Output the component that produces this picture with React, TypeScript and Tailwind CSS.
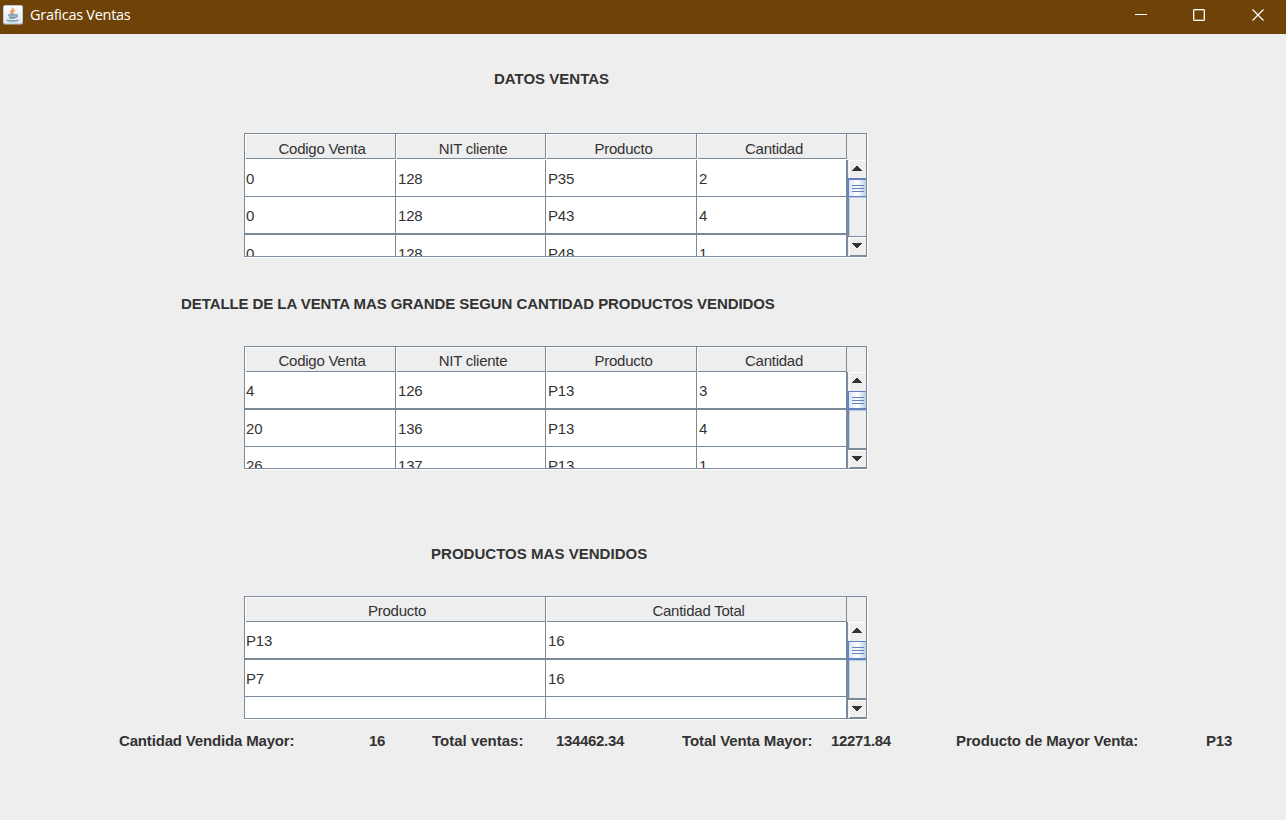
type TableProps = {
  headers: string[];
  rows: string[][];
  columns: string;
  first?: boolean;
};

function JavaIcon() {
  return (
    <svg width="20" height="20" viewBox="0 0 20 20" className="shrink-0">
      <defs>
        <linearGradient id="tile" x1="0" y1="0" x2="0" y2="1">
          <stop offset="0" stopColor="#ffffff" />
          <stop offset="1" stopColor="#dde3ea" />
        </linearGradient>
      </defs>
      <rect x="0.5" y="0.5" width="19" height="18.5" rx="1.5" fill="url(#tile)" stroke="#b9cbdc" />
      <g fill="none" strokeLinecap="round">
        <path d="M9.800 3.200c.9 1.900-2.600 2.600-2 4.200.2.600.8.900 1 1.400M11.400 5.400c-1.900.8-2.200 1.900-1.300 3" stroke="#e8893c" strokeWidth="1.300" />
        <path d="M5.600 10h7.200M6.400 11.800c1.500.5 4 .5 5.600 0M7 13.200h4.200M12.800 9.800c2.400-.5 2 2.300-.6 2.600" stroke="#6f95b0" strokeWidth="1.300" />
        <path d="M4.300 15.300c2 .9 8.300.9 10.400 0" stroke="#6f95b0" strokeWidth="1.400" />
      </g>
    </svg>
  );
}

function TitleBar() {
  return (
    <header className="flex h-[34px] items-center bg-[#6f4307] pl-[3px]">
      <div className="-mt-[5px]"><JavaIcon /></div>
      <h1 className="-mt-[4px] ml-[7px] flex-1 font-['Open_Sans',sans-serif] text-[14.5px] leading-5 tracking-[-0.27px] text-white">Graficas Ventas</h1>
      <svg width="176" height="34" fill="none" stroke="white" strokeWidth="1">
        <path d="M25 14.500h12" />
        <rect x="83.500" y="9.500" width="11" height="11" rx="0.500" />
        <rect x="84.500" y="10.500" width="9" height="9" strokeOpacity="0.35" />
        <path d="M142.500 9.500l11 11M153.500 9.500l-11 11" strokeWidth="1.200" />
      </svg>
    </header>
  );
}

function Arrow({ down = false }: { down?: boolean }) {
  return (
    <svg width="10" height="5" viewBox="0 0 10 5" fill="#333333" shapeRendering="crispEdges">
      {down ? <path d="M0 0h10v1h-1v1h-1v1h-1v1h-1v1h-2v-1h-1v-1h-1v-1h-1v-1h-1z" /> : <path d="M4 0h2v1h1v1h1v1h1v1h1v1h-10v-1h1v-1h1v-1h1v-1h1z" />}
    </svg>
  );
}

function ScrollBar({ first }: { first?: boolean }) {
  return (
    <div className="flex min-h-0 flex-1 flex-col border-l border-[#7a8a99]">
      <div className={`ml-px shrink-0 border-l border-t border-white bg-[#eeeeee] pl-[2px] pt-[5px] ${first ? "h-[18px]" : "h-[19px]"}`}>
        <Arrow />
      </div>
      <div className={`-ml-px flex h-[19px] shrink-0 flex-col gap-[2px] border-l-2 border-[#6382bf] bg-linear-to-r from-[#d8e6f5] via-white to-[#b8cfe5] pl-[3px] ${first ? "border-t-2 border-b pt-[5px]" : "border-t border-b-2 pt-[5px]"}`}>
        <i className="block h-px w-[12px] bg-[#6382bf]" />
        <i className="block h-px w-[12px] bg-[#6382bf]" />
        <i className="block h-px w-[12px] bg-[#6382bf]" />
      </div>
      <div className="flex-1 border-l border-[#7a8a99]">
        <div className="h-full border-l border-t border-[#b8cfe5]" />
      </div>
      <div className={`flex shrink-0 flex-col border-[#7a8a99] ${first ? "h-[20px] border-t" : "h-[20px] border-t-2"}`}>
        <div className="ml-px flex-1 border-l border-t border-white bg-[#eeeeee] pl-[2px] pt-[5px]">
          <Arrow down />
        </div>
        <div className="ml-[2px] h-px shrink-0 bg-[#7a8a99]" />
      </div>
    </div>
  );
}

function DataTable({ headers, rows, columns, first }: TableProps) {
  return (
    <div className={`flex w-[624px] border-b border-r border-white ${first ? "h-[125px]" : "h-[124px]"}`}>
      <div className="flex w-[623px] border border-[#7a8a99] text-[15px]">
        <div className="flex w-[602px] flex-col overflow-hidden bg-white">
          <div className={`grid h-[25px] shrink-0 ${columns}`}>
            {headers.map((h, i) => (
              <div key={h} className="border-r border-[#7a8a99]">
                <div className={`ml-px mt-px h-[24px] border-b border-[#7a8a99] bg-[#eeeeee] text-center tracking-[-0.25px] ${i === 0 ? "pl-[3px]" : "pl-[4px]"} ${first ? "leading-[28px]" : "leading-[26px]"}`}>{h}</div>
              </div>
            ))}
          </div>
          {first && <div className="h-px shrink-0 bg-white" />}
          {rows.map((row, r) => {
            const height = first
              ? ["h-[37px] border-b leading-[38px]", "h-[38px] border-b-2 leading-[38px]", "h-[37px] leading-[37px]"][r]
              : ["h-[38px] border-b-2 leading-[38px]", "h-[37px] border-b leading-[38px]", "h-[37px] leading-[37px]"][r];
            return (
              <div key={r} className={`grid shrink-0 border-[#7a8a99] ${columns} ${height}`}>
                {row.map((cell, c) => (
                  <div key={c} className={`min-w-0 border-r border-[#7a8a99] tracking-[-0.2px] ${c === 0 ? "pl-px" : "pl-[2px]"}`}>{cell}</div>
                ))}
              </div>
            );
          })}
        </div>
        <div className="flex flex-1 flex-col">
          <div className={`shrink-0 ${first ? "h-[26px]" : "h-[25px]"}`} />
          <ScrollBar first={first} />
        </div>
      </div>
    </div>
  );
}

const ventaHeaders = ["Codigo Venta", "NIT cliente", "Producto", "Cantidad"];
const fourColumns = "grid-cols-[151px_150px_151px_150px]";
const twoColumns = "grid-cols-[301px_301px]";

export default function App() {
  return (
    <div className="h-[820px] w-[1286px] overflow-hidden bg-[#eeeeee] font-['Liberation_Sans',Arial,sans-serif] text-[#333333]">
      <TitleBar />
      <main>
        <h2 className="ml-[494px] mt-[35px] h-5 text-[15px] leading-5 font-bold">DATOS VENTAS</h2>
        <div className="ml-[244px] mt-[44px]">
          <DataTable first headers={ventaHeaders} columns={fourColumns} rows={[["0", "128", "P35", "2"], ["0", "128", "P43", "4"], ["0", "128", "P48", "1"]]} />
        </div>
        <h2 className="ml-[181px] mt-[36px] h-5 text-[15px] leading-5 font-bold tracking-[-0.08px]">DETALLE DE LA VENTA MAS GRANDE SEGUN CANTIDAD PRODUCTOS VENDIDOS</h2>
        <div className="ml-[244px] mt-[32px]">
          <DataTable headers={ventaHeaders} columns={fourColumns} rows={[["4", "126", "P13", "3"], ["20", "136", "P13", "4"], ["26", "137", "P13", "1"]]} />
        </div>
        <h2 className="ml-[431px] mt-[74px] h-5 text-[15px] leading-5 font-bold tracking-[0.03px]">PRODUCTOS MAS VENDIDOS</h2>
        <div className="ml-[244px] mt-[32px]">
          <DataTable headers={["Producto", "Cantidad Total"]} columns={twoColumns} rows={[["P13", "16"], ["P7", "16"], ["", ""]]} />
        </div>
        <div className="mt-[11px] flex h-5 pl-[119px] text-[15px] leading-5 font-bold whitespace-nowrap">
          <span className="w-[250px] tracking-[-0.17px]">Cantidad Vendida Mayor:</span>
          <span className="w-[63px] tracking-[-0.3px]">16</span>
          <span className="w-[124px]">Total ventas:</span>
          <span className="w-[126px] tracking-[-0.33px]">134462.34</span>
          <span className="w-[149px] tracking-[-0.11px]">Total Venta Mayor:</span>
          <span className="w-[125px] tracking-[-0.36px]">12271.84</span>
          <span className="w-[250px] tracking-[-0.12px]">Producto de Mayor Venta:</span>
          <span className="tracking-[-0.2px]">P13</span>
        </div>
      </main>
    </div>
  );
}
